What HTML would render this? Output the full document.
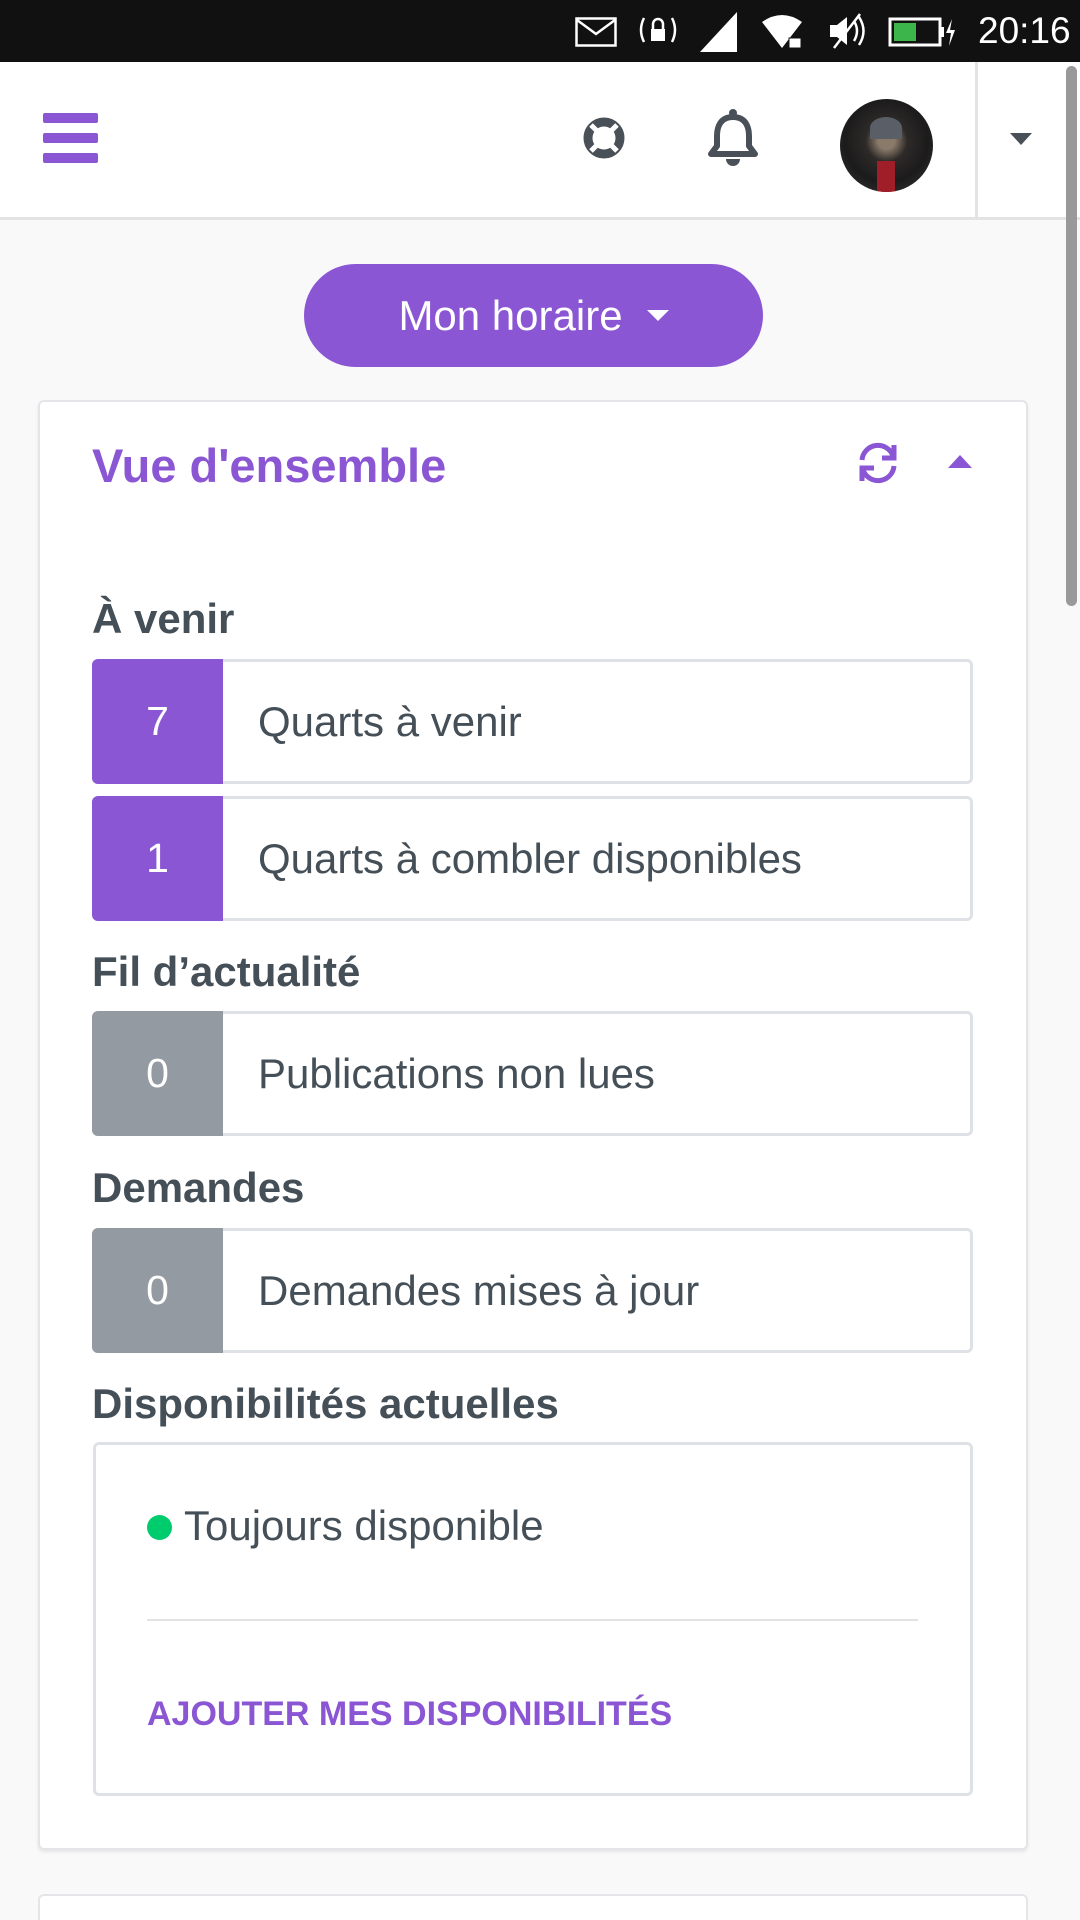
<!DOCTYPE html>
<html><head><meta charset="utf-8"><style>
*{margin:0;padding:0;box-sizing:border-box}
html,body{width:1080px;height:1920px;overflow:hidden}
body{background:#f9f9f9;font-family:"Liberation Sans",sans-serif;position:relative;color:#454f57}
.a{position:absolute}
.status{left:0;top:0;width:1080px;height:62px;background:#111}
.hdr{left:0;top:62px;width:1080px;height:158px;background:#fff;border-bottom:3px solid #e3e3e3}
.bar{left:43px;width:55px;height:10px;background:#8a56d4;border-radius:2px}
.btn{left:304px;top:264px;width:459px;height:103px;background:#8a56d4;border-radius:52px;color:#fff;font-size:42px;display:flex;align-items:center;justify-content:center}
.card{left:38px;top:400px;width:990px;height:1450px;background:#fff;border:2px solid #e3e5e8;border-radius:6px;box-shadow:0 2px 3px rgba(0,0,0,.08)}
.h{font-size:42px;font-weight:bold;left:92px}
.row{left:92px;width:881px;height:125px;border:3px solid #dee2e6;border-radius:6px;background:#fff}
.badge{position:absolute;left:-3px;top:-3px;bottom:-3px;width:131px;border-radius:6px 0 0 6px;color:#fff;font-size:41px;display:flex;align-items:center;justify-content:center}
.row span{position:absolute;left:163px;top:0;line-height:119px;font-size:42px}
.p{background:#8a56d4}.g{background:#939aa1}
</style></head><body>
<div class="a status">
<svg class="a" style="left:575px;top:17px" width="42" height="30" viewBox="0 0 42 30"><rect x="1.5" y="1.5" width="39" height="27" fill="none" stroke="#fff" stroke-width="2.5"/><path d="M2 3L21 17L40 3" fill="none" stroke="#fff" stroke-width="2.5"/></svg>
<svg class="a" style="left:638px;top:12px" width="40" height="38"><path d="M6 6Q0 18 6 30M34 6Q40 18 34 30" fill="none" stroke="#fff" stroke-width="2.5"/><rect x="13" y="17" width="14" height="12" fill="#fff"/><path d="M15 17V12a5 5 0 0 1 10 0v5" fill="none" stroke="#fff" stroke-width="2.5"/></svg>
<svg class="a" style="left:700px;top:12px" width="38" height="40"><path d="M37 0V40H0Z" fill="#fff"/></svg>
<svg class="a" style="left:760px;top:14px" width="46" height="36"><path d="M2 8Q22 -6 42 8L22 34Z" fill="#fff"/><rect x="29" y="24" width="12" height="10" fill="#fff" stroke="#111" stroke-width="1"/></svg>
<svg class="a" style="left:826px;top:12px" width="40" height="40"><path d="M4 13h7l10-8v28l-10-8H4z" fill="#fff"/><path d="M28 9q6 10 0 20M33 5q9 14 0 28M8 36L34 2" fill="none" stroke="#fff" stroke-width="2.5"/></svg>
<svg class="a" style="left:888px;top:16px" width="68" height="32"><rect x="2" y="3" width="50" height="26" fill="none" stroke="#fff" stroke-width="3"/><rect x="6" y="7" width="22" height="18" fill="#3cb64a"/><rect x="52" y="11" width="4" height="10" fill="#fff"/><path d="M64 3l-6 14h5l-2 13 6-16h-5z" fill="#fff"/></svg>
<div class="a" style="left:978px;top:10px;color:#fff;font-size:37px">20:16</div>
</div>
<div class="a hdr">
<div class="a bar" style="top:51px"></div><div class="a bar" style="top:71px"></div><div class="a bar" style="top:91px"></div>
<svg class="a" style="left:582px;top:54px" width="44" height="44" viewBox="0 0 44 44"><circle cx="22" cy="22" r="16" fill="none" stroke="#4a5058" stroke-width="9"/><circle cx="22" cy="22" r="7" fill="#fff"/><g stroke="#fff" stroke-width="5"><path d="M9 9l7 7M35 9l-7 7M9 35l7-7M35 35l-7-7"/></g></svg>
<svg class="a" style="left:707px;top:46px" width="52" height="62" viewBox="0 0 52 62"><circle cx="26" cy="5" r="4" fill="#4a5058"/><path d="M26 9C14 9 10 18 10 28V38L4 46H48L42 38V28C42 18 38 9 26 9Z" fill="none" stroke="#4a5058" stroke-width="6" stroke-linejoin="round"/><path d="M19 51a7 7 0 0 0 14 0z" fill="#4a5058"/></svg>
<div class="a" style="left:840px;top:37px;width:93px;height:93px;border-radius:50%;background:radial-gradient(circle at 50% 45%,#8a7a6a 0 12%,#2d2a28 30%,#1c1b1c 60%,#3a3a3a 100%);overflow:hidden"><div class="a" style="left:37px;top:62px;width:18px;height:31px;background:#a01e28"></div><div class="a" style="left:30px;top:18px;width:32px;height:22px;border-radius:50% 50% 0 0;background:#5a5e66"></div></div>
<div class="a" style="left:975px;top:0;width:3px;height:158px;background:#e3e3e3"></div>
<div class="a" style="left:1010px;top:71px;width:0;height:0;border-left:11px solid transparent;border-right:11px solid transparent;border-top:12px solid #4a5058"></div>
</div>
<div class="a" style="left:1066px;top:66px;width:11px;height:540px;background:#999;border-radius:6px"></div>
<div class="a btn">Mon horaire<span style="display:inline-block;margin-left:24px;border-left:11px solid transparent;border-right:11px solid transparent;border-top:11px solid #fff"></span></div>
<div class="a card"></div>
<div class="a" style="left:92px;top:438px;font-size:47px;font-weight:bold;color:#8a56d4">Vue d'ensemble</div>
<svg class="a" style="left:855px;top:440px" width="46" height="46" viewBox="0 0 46 46"><g fill="none" stroke="#8a56d4" stroke-width="5"><path d="M7 20A16 16 0 0 1 38 16"/><path d="M39 26A16 16 0 0 1 8 30"/><path d="M39 5V18H27"/><path d="M7 41V28H19"/></g></svg>
<div class="a" style="left:948px;top:455px;border-left:12px solid transparent;border-right:12px solid transparent;border-bottom:13px solid #8a56d4"></div>
<div class="a h" style="top:595px">À venir</div>
<div class="a row" style="top:659px"><div class="badge p">7</div><span>Quarts à venir</span></div>
<div class="a row" style="top:796px"><div class="badge p">1</div><span>Quarts à combler disponibles</span></div>
<div class="a h" style="top:948px">Fil d’actualité</div>
<div class="a row" style="top:1011px"><div class="badge g">0</div><span>Publications non lues</span></div>
<div class="a h" style="top:1164px">Demandes</div>
<div class="a row" style="top:1228px"><div class="badge g">0</div><span>Demandes mises à jour</span></div>
<div class="a h" style="top:1380px">Disponibilités actuelles</div>
<div class="a" style="left:93px;top:1442px;width:880px;height:354px;border:3px solid #dee2e6;border-radius:6px;background:#fff"></div>
<div class="a" style="left:147px;top:1515px;width:25px;height:25px;border-radius:50%;background:#00cc6e"></div>
<div class="a" style="left:184px;top:1502px;font-size:42px">Toujours disponible</div>
<div class="a" style="left:147px;top:1619px;width:771px;height:2px;background:#e3e3e3"></div>
<div class="a" style="left:147px;top:1695px;font-size:34px;font-weight:bold;color:#8a56d4">AJOUTER MES DISPONIBILITÉS</div>
<div class="a" style="left:38px;top:1894px;width:990px;height:26px;background:#fff;border:2px solid #e3e5e8;border-bottom:none;border-radius:6px 6px 0 0"></div>
</body></html>
